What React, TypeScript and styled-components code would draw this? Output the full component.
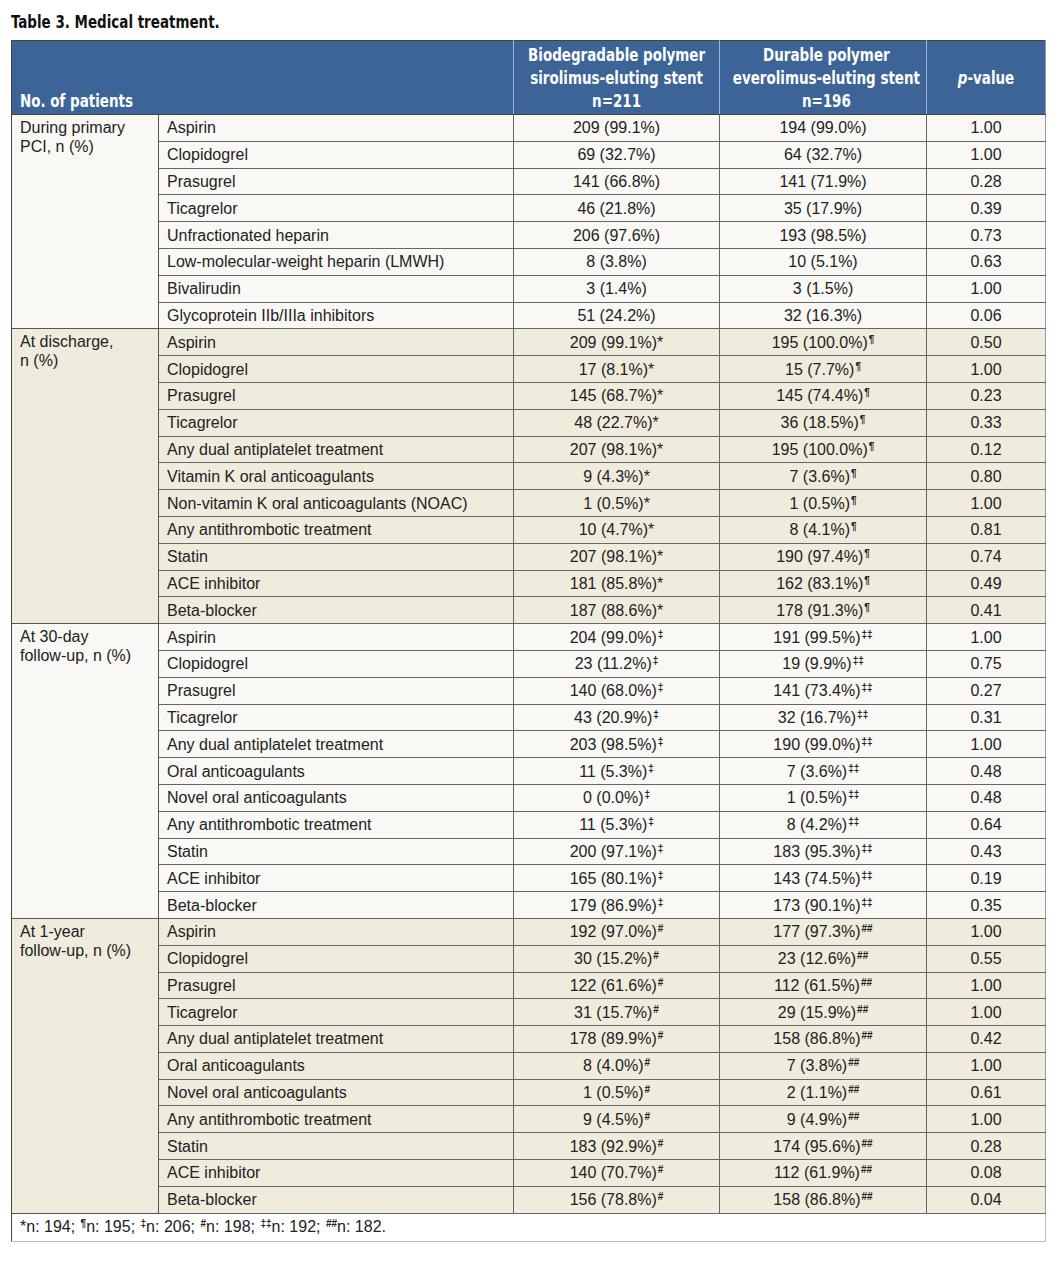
import React from "react";
import styled, { createGlobalStyle } from "styled-components";

const GlobalStyle = createGlobalStyle`
  body {
    margin: 0;
    background: #ffffff;
    color: #222;
    font-family: "Liberation Sans", Arial, sans-serif;
  }
`;

const Page = styled.div`
  padding: 11px 14px 20px 11px;
  width: 1034px;
`;

const Caption = styled.h1`
  margin: 0 0 7px 0;
  font-family: "DejaVu Sans Condensed", sans-serif;
  font-weight: bold;
  font-size: 17px;
  line-height: 22px;
  color: #111;
  white-space: nowrap;
  transform: scaleX(0.88);
  transform-origin: left center;
`;

const Table = styled.table`
  border-collapse: collapse;
  width: 1034px;
  table-layout: fixed;
  font-size: 16px;
  border-left: 1px solid #444;
  border-top: 1px solid #444;
  border-right: 1px solid #999;
`;

const HeadCell = styled.th<{ $align?: string; $valign?: string }>`
  background: #3c6496;
  color: #fff;
  font-family: "DejaVu Sans Condensed", sans-serif;
  font-weight: bold;
  font-size: 17px;
  line-height: 23px;
  white-space: nowrap;
  text-align: ${p => p.$align || "center"};
  vertical-align: ${p => p.$valign || "middle"};
  padding: 3px 0 1px ${p => (p.$align === "left" ? "8px" : "0")};
  border-left: 1px solid #9fb1cc;
  border-bottom: 1px solid #444;
  &:first-child {
    border-left: none;
  }
`;

const Squeeze = styled.span<{ $origin?: string }>`
  display: inline-block;
  transform: scaleX(0.88);
  transform-origin: ${p => p.$origin || "center"} center;
`;

const HeadRow = styled.tr`
  height: 74px;
`;

const BodyRow = styled.tr`
  height: 26.8px;
`;

const GroupCell = styled.td<{ $bg: string }>`
  background: ${p => p.$bg};
  vertical-align: top;
  padding: 3px 8px 0 8px;
  line-height: 19px;
  border-bottom: 1px solid #555;
  border-right: 1px solid #555;
`;

const Cell = styled.td<{ $bg: string; $align?: string }>`
  background: ${p => p.$bg};
  text-align: ${p => p.$align || "center"};
  padding: 1px 8px 0 8px;
  line-height: 18px;
  white-space: nowrap;
  border-bottom: 1px solid #666;
  border-left: 1px solid #666;
`;

const Sup = styled.sup`
  font-size: 10px;
  font-weight: bold;
  vertical-align: 5px;
  line-height: 0;
  margin-left: 1px;
`;

const FootCell = styled.td`
  background: #fff;
  padding: 0 8px;
  height: 27px;
  font-size: 16px;
  border-bottom: 1px solid #bbb;
  border-right: 1px solid #bbb;
`;

type Row = [string, string, string, string];

interface Group {
  label: string[];
  bg: string;
  mark1: string;
  mark2: string;
  rows: Row[];
}

const groups: Group[] = [
  {
    label: ["During primary", "PCI, n (%)"],
    bg: "#f9f8f4",
    mark1: "",
    mark2: "",
    rows: [
      ["Aspirin", "209 (99.1%)", "194 (99.0%)", "1.00"],
      ["Clopidogrel", "69 (32.7%)", "64 (32.7%)", "1.00"],
      ["Prasugrel", "141 (66.8%)", "141 (71.9%)", "0.28"],
      ["Ticagrelor", "46 (21.8%)", "35 (17.9%)", "0.39"],
      ["Unfractionated heparin", "206 (97.6%)", "193 (98.5%)", "0.73"],
      ["Low-molecular-weight heparin (LMWH)", "8 (3.8%)", "10 (5.1%)", "0.63"],
      ["Bivalirudin", "3 (1.4%)", "3 (1.5%)", "1.00"],
      ["Glycoprotein IIb/IIIa inhibitors", "51 (24.2%)", "32 (16.3%)", "0.06"],
    ],
  },
  {
    label: ["At discharge,", "n (%)"],
    bg: "#efebdd",
    mark1: "*",
    mark2: "¶",
    rows: [
      ["Aspirin", "209 (99.1%)", "195 (100.0%)", "0.50"],
      ["Clopidogrel", "17 (8.1%)", "15 (7.7%)", "1.00"],
      ["Prasugrel", "145 (68.7%)", "145 (74.4%)", "0.23"],
      ["Ticagrelor", "48 (22.7%)", "36 (18.5%)", "0.33"],
      ["Any dual antiplatelet treatment", "207 (98.1%)", "195 (100.0%)", "0.12"],
      ["Vitamin K oral anticoagulants", "9 (4.3%)", "7 (3.6%)", "0.80"],
      ["Non-vitamin K oral anticoagulants (NOAC)", "1 (0.5%)", "1 (0.5%)", "1.00"],
      ["Any antithrombotic treatment", "10 (4.7%)", "8 (4.1%)", "0.81"],
      ["Statin", "207 (98.1%)", "190 (97.4%)", "0.74"],
      ["ACE inhibitor", "181 (85.8%)", "162 (83.1%)", "0.49"],
      ["Beta-blocker", "187 (88.6%)", "178 (91.3%)", "0.41"],
    ],
  },
  {
    label: ["At 30-day", "follow-up, n (%)"],
    bg: "#f9f8f4",
    mark1: "‡",
    mark2: "‡‡",
    rows: [
      ["Aspirin", "204 (99.0%)", "191 (99.5%)", "1.00"],
      ["Clopidogrel", "23 (11.2%)", "19 (9.9%)", "0.75"],
      ["Prasugrel", "140 (68.0%)", "141 (73.4%)", "0.27"],
      ["Ticagrelor", "43 (20.9%)", "32 (16.7%)", "0.31"],
      ["Any dual antiplatelet treatment", "203 (98.5%)", "190 (99.0%)", "1.00"],
      ["Oral anticoagulants", "11 (5.3%)", "7 (3.6%)", "0.48"],
      ["Novel oral anticoagulants", "0 (0.0%)", "1 (0.5%)", "0.48"],
      ["Any antithrombotic treatment", "11 (5.3%)", "8 (4.2%)", "0.64"],
      ["Statin", "200 (97.1%)", "183 (95.3%)", "0.43"],
      ["ACE inhibitor", "165 (80.1%)", "143 (74.5%)", "0.19"],
      ["Beta-blocker", "179 (86.9%)", "173 (90.1%)", "0.35"],
    ],
  },
  {
    label: ["At 1-year", "follow-up, n (%)"],
    bg: "#efebdd",
    mark1: "#",
    mark2: "##",
    rows: [
      ["Aspirin", "192 (97.0%)", "177 (97.3%)", "1.00"],
      ["Clopidogrel", "30 (15.2%)", "23 (12.6%)", "0.55"],
      ["Prasugrel", "122 (61.6%)", "112 (61.5%)", "1.00"],
      ["Ticagrelor", "31 (15.7%)", "29 (15.9%)", "1.00"],
      ["Any dual antiplatelet treatment", "178 (89.9%)", "158 (86.8%)", "0.42"],
      ["Oral anticoagulants", "8 (4.0%)", "7 (3.8%)", "1.00"],
      ["Novel oral anticoagulants", "1 (0.5%)", "2 (1.1%)", "0.61"],
      ["Any antithrombotic treatment", "9 (4.5%)", "9 (4.9%)", "1.00"],
      ["Statin", "183 (92.9%)", "174 (95.6%)", "0.28"],
      ["ACE inhibitor", "140 (70.7%)", "112 (61.9%)", "0.08"],
      ["Beta-blocker", "156 (78.8%)", "158 (86.8%)", "0.04"],
    ],
  },
];

function Mark({ m }: { m: string }) {
  if (!m) return null;
  if (m === "*") return <span>*</span>;
  return <Sup>{m}</Sup>;
}

export default function App() {
  return (
    <Page>
      <GlobalStyle />
      <Caption>Table 3. Medical treatment.</Caption>
      <Table>
        <colgroup>
          <col style={{ width: 147 }} />
          <col style={{ width: 355 }} />
          <col style={{ width: 206 }} />
          <col style={{ width: 207 }} />
          <col style={{ width: 119 }} />
        </colgroup>
        <thead>
          <HeadRow>
            <HeadCell colSpan={2} $align="left" $valign="bottom">
              <Squeeze $origin="left">No. of patients</Squeeze>
            </HeadCell>
            <HeadCell>
              <Squeeze>
                Biodegradable polymer
                <br />
                sirolimus-eluting stent
                <br />
                n=211
              </Squeeze>
            </HeadCell>
            <HeadCell>
              <Squeeze>
                Durable polymer
                <br />
                everolimus-eluting stent
                <br />
                n=196
              </Squeeze>
            </HeadCell>
            <HeadCell>
              <Squeeze>
                <i>p</i>-value
              </Squeeze>
            </HeadCell>
          </HeadRow>
        </thead>
        <tbody>
          {groups.map(g =>
            g.rows.map((r, i) => (
              <BodyRow key={g.label[0] + r[0]}>
                {i === 0 && (
                  <GroupCell $bg={g.bg} rowSpan={g.rows.length}>
                    {g.label[0]}
                    <br />
                    {g.label[1]}
                  </GroupCell>
                )}
                <Cell $bg={g.bg} $align="left">
                  {r[0]}
                </Cell>
                <Cell $bg={g.bg}>
                  {r[1]}
                  <Mark m={g.mark1} />
                </Cell>
                <Cell $bg={g.bg}>
                  {r[2]}
                  <Mark m={g.mark2} />
                </Cell>
                <Cell $bg={g.bg}>{r[3]}</Cell>
              </BodyRow>
            ))
          )}
          <tr>
            <FootCell colSpan={5}>
              *n: 194; <Sup>¶</Sup>n: 195; <Sup>‡</Sup>n: 206; <Sup>#</Sup>n: 198;{" "}
              <Sup>‡‡</Sup>n: 192; <Sup>##</Sup>n: 182.
            </FootCell>
          </tr>
        </tbody>
      </Table>
    </Page>
  );
}
